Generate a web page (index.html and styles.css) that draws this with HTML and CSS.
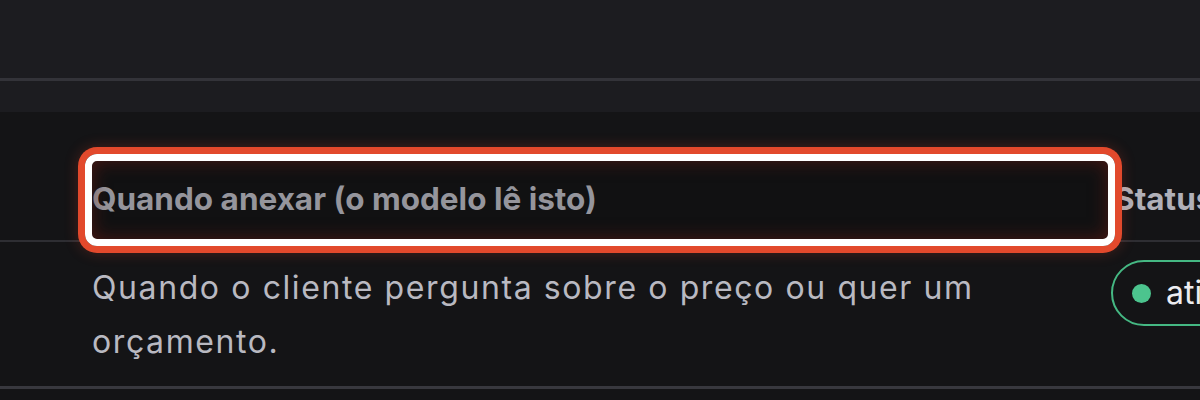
FILE: index.html
```html
<!DOCTYPE html>
<html lang="pt">
<head>
  <meta charset="UTF-8" />
  <title>Anexos</title>
  <link rel="stylesheet" href="styles.css">
</head>
<body>

  <div class="page">
    <div class="toolbar"></div>
    <div class="subbar"></div>

    <div class="table">
      <div class="row head">
        <div class="cell first">Quando anexar (o modelo lê isto)</div>
        <div class="cell">Status</div>
      </div>
      <div class="row body-row">
        <div class="cell first">Quando o cliente pergunta sobre o preço ou quer um orçamento.</div>
        <div class="cell">
          <span class="pill"><span class="dot"></span>ativo</span>
        </div>
      </div>
    </div>

    <div class="highlight"></div>
  </div>

</body>
</html>
```

FILE: styles.css
```css
body {
  margin: 0;
  background-color: #141416;
  font-family: Inter, "Liberation Sans", sans-serif;
  overflow: hidden;
}

.page {
  position: relative;
  width: 1200px;
  height: 400px;
  overflow: hidden;
}

.toolbar {
  height: 78px;
  background-color: #1c1c20;
  border-bottom: 3px solid #333339;
}

.subbar {
  height: 31px;
  background-color: #1c1c20;
}

.row {
  display: grid;
  grid-template-columns: 1021px 1fr;
}

.cell.first {
  padding-left: 92px;
}

.head {
  height: 130px;
  align-items: end;
  border-bottom: 2px solid #2e2e33;
  box-sizing: border-box;
  font-size: 31.5px;
  font-weight: 700;
  line-height: 38px;
  color: #b0b0b8;
}

.head .cell {
  padding-bottom: 22px;
}

.head .cell:last-child {
  padding-left: 93px;
}

.body-row {
  height: 147px;
  border-bottom: 3px solid #38383e;
  box-sizing: border-box;
  font-size: 32px;
  letter-spacing: 1.6px;
  line-height: 54px;
  color: #b9b9c1;
}

.body-row .cell.first {
  padding-top: 19px;
  padding-right: 20px;
}

.body-row .cell:last-child {
  padding-top: 18px;
  padding-left: 90px;
}

.pill {
  display: inline-flex;
  align-items: center;
  gap: 15px;
  height: 62px;
  padding: 0 22px 0 19px;
  border: 2px solid #45b883;
  border-radius: 34px;
  color: #ececf0;
  letter-spacing: 0;
  white-space: nowrap;
}

.dot {
  width: 19px;
  height: 19px;
  border-radius: 50%;
  background-color: #4cc48e;
}

.highlight {
  position: absolute;
  left: 85px;
  top: 154px;
  width: 1030px;
  height: 92px;
  box-sizing: border-box;
  border: 7px solid #ffffff;
  border-radius: 12px;
  background: rgba(0, 0, 0, 0.15);
  box-shadow: 0 0 0 7px #e2492c, 0 0 14px 7px rgba(226, 73, 44, 0.25), inset 0 0 18px rgba(120, 30, 20, 0.55);
}
```
